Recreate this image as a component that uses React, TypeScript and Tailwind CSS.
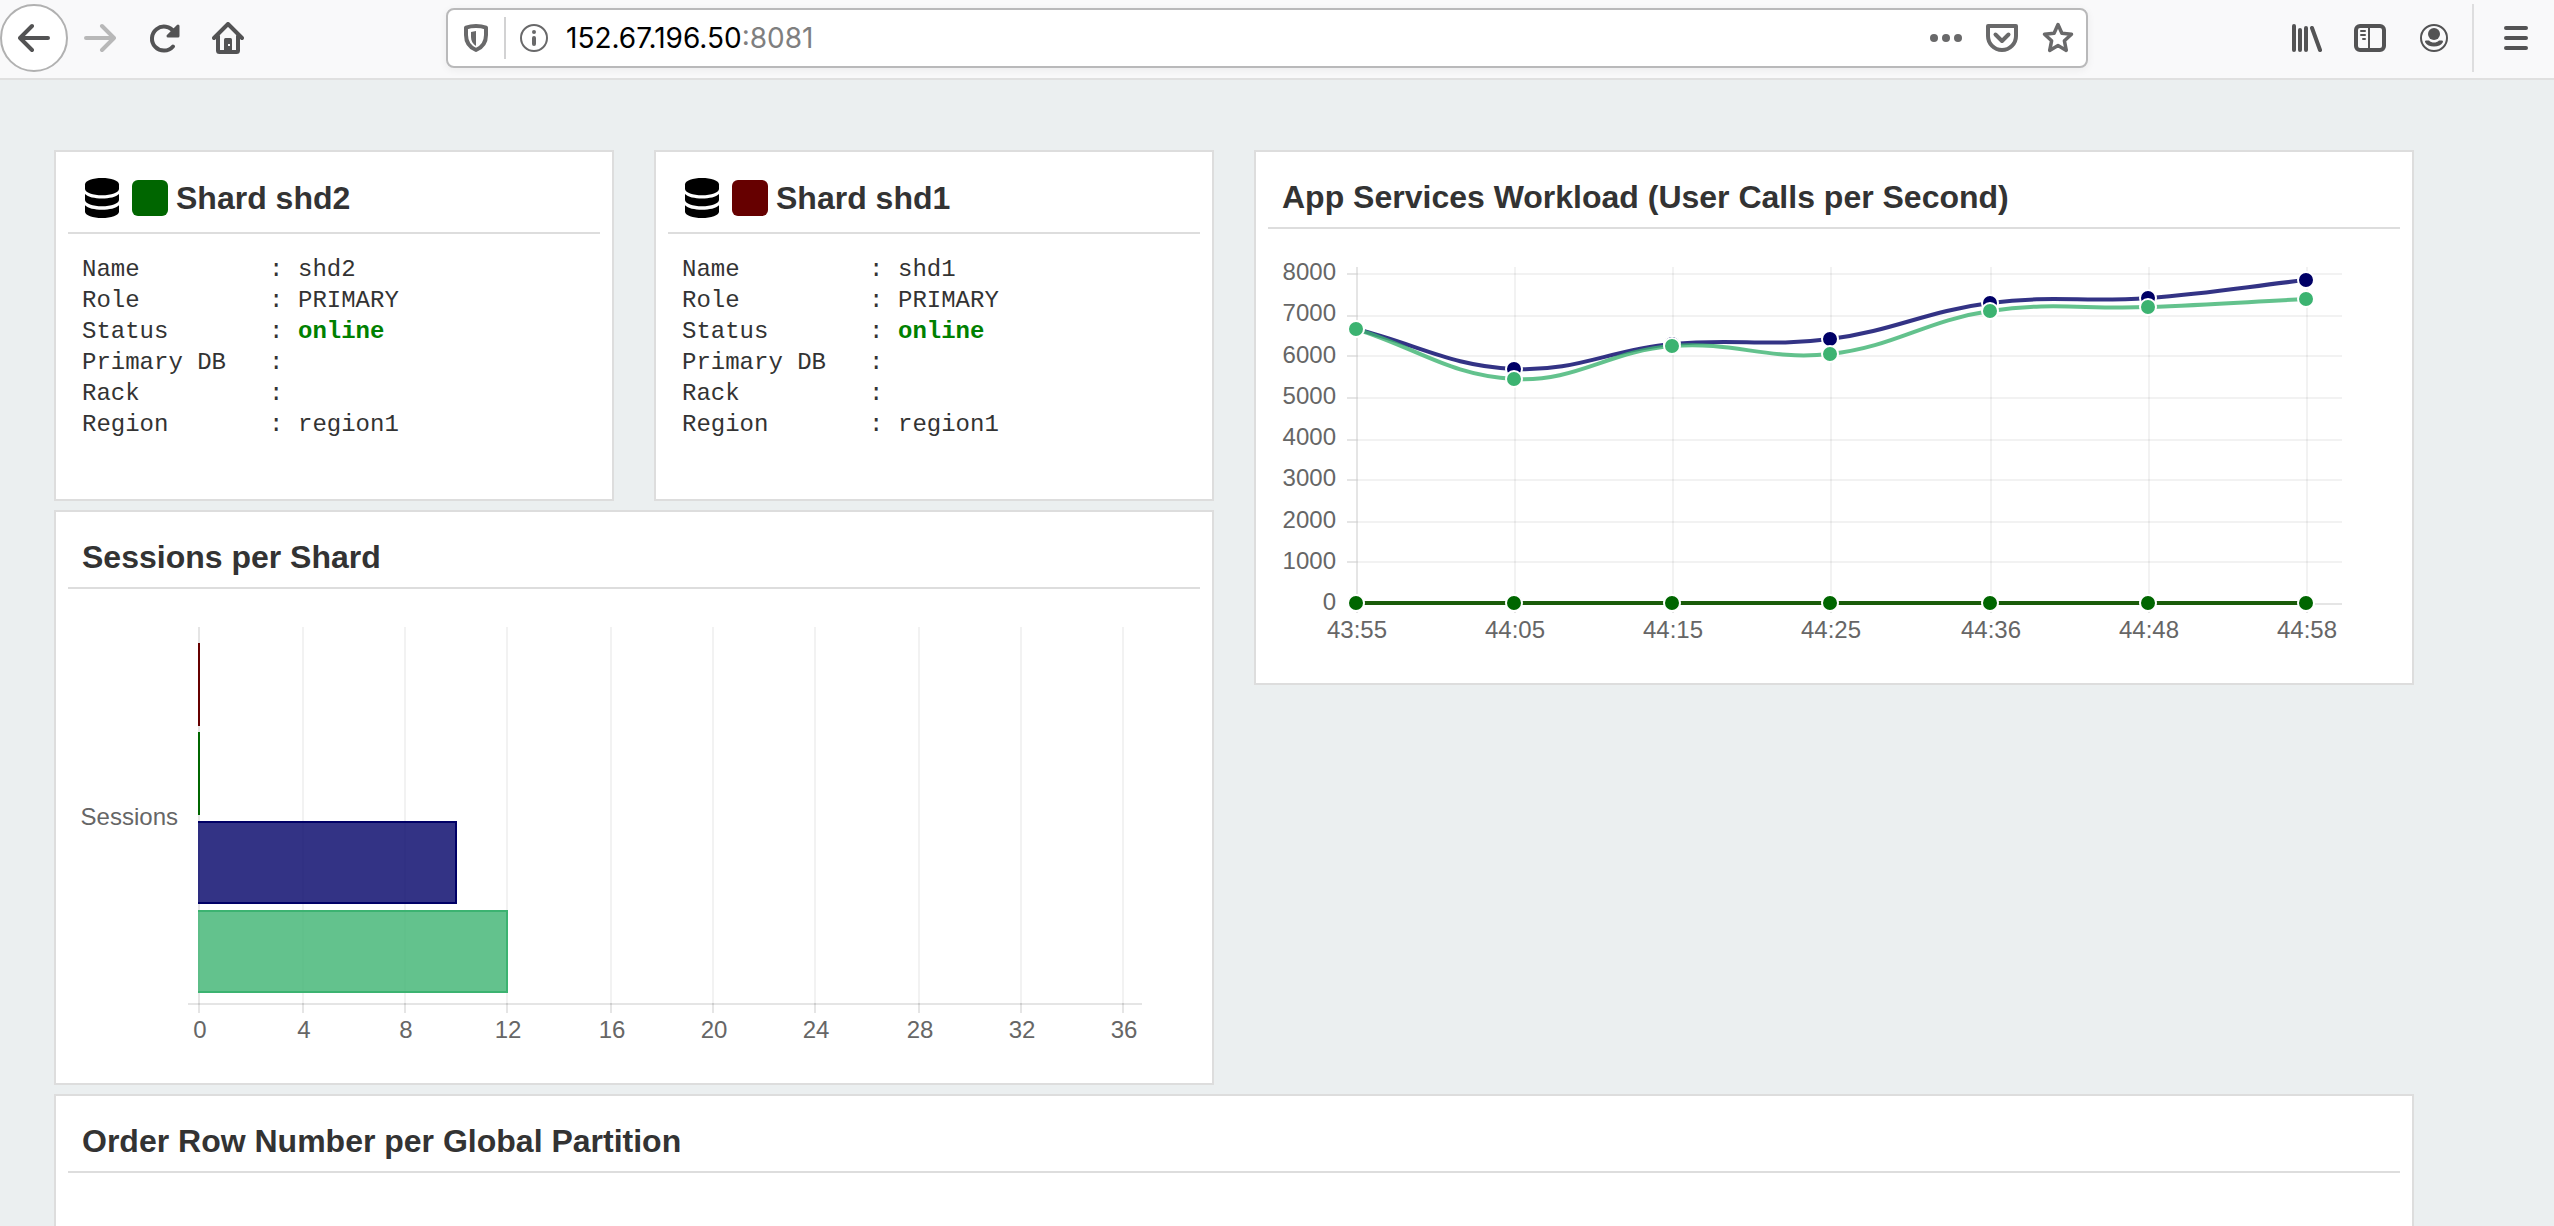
import React from 'react';

type Point = { x: number; y: number };

const SANS = 'font-[Liberation_Sans,Arial,sans-serif]';

function Icon({ children, className = '' }: { children: React.ReactNode; className?: string }) {
  return (
    <svg
      viewBox="0 0 32 32"
      className={`size-8 shrink-0 ${className}`}
      fill="none"
      stroke="currentColor"
      strokeWidth={4}
      strokeLinecap="round"
      strokeLinejoin="round"
      aria-hidden="true"
    >
      {children}
    </svg>
  );
}

function IconButton({ label, children, className = '' }: { label: string; children: React.ReactNode; className?: string }) {
  return (
    <button type="button" aria-label={label} className={`flex shrink-0 items-center justify-center ${className}`}>
      {children}
    </button>
  );
}

function Toolbar() {
  return (
    <header className="flex h-20 shrink-0 items-center border-b-2 border-[#e0e0e0] bg-[#f9f9fa] pb-0.5 text-[#535354]">
      <nav className="flex shrink-0 items-center gap-8">
        <div className="flex items-center gap-4">
          <IconButton label="Back" className="size-[68px] rounded-full border-2 border-[#b1b1b1] bg-white">
            <Icon>
              <path d="M2 16H30M14 4L2 16l12 12" />
            </Icon>
          </IconButton>
          <IconButton label="Forward" className="text-[#b8b8b8]">
            <Icon>
              <path d="M2 16H30M18 4l12 12-12 12" />
            </Icon>
          </IconButton>
        </div>
        <IconButton label="Reload">
          <Icon>
            <path d="M25 24.5A12 12 0 1 1 26 10" />
            <path d="M30 4v10H20z" fill="currentColor" strokeWidth={3} />
          </Icon>
        </IconButton>
        <IconButton label="Home">
          <Icon>
            <path d="M2 16L16 2l14 14M6 14v14.500q0 1.500 1.500 1.500h17q1.500 0 1.500-1.500V14" />
            <rect x="12" y="16" width="8" height="14" rx="1.500" fill="currentColor" stroke="none" />
            <rect x="16" y="22" width="2" height="2" fill="#f9f9fa" stroke="none" />
          </Icon>
        </IconButton>
      </nav>

      <div className="mx-[202px] flex h-[60px] min-w-0 flex-1 items-center rounded-lg border-2 border-[#b9b9ba] bg-white px-3 text-[#69696a] shadow-[0_2px_8px_rgba(0,0,0,0.06)]">
        <IconButton label="Tracking protection">
          <Icon>
            <path d="M16 4c4 0 7.500.700 10 1.600V13c0 7.500-4 12.500-10 15-6-2.500-10-7.500-10-15V5.600C8.500 4.700 12 4 16 4z" />
            <path d="M16 9l-5 1v5c0 4 1.800 7 5 9z" fill="currentColor" stroke="none" />
          </Icon>
        </IconButton>
        <span className="mx-3 h-[42px] w-0.5 shrink-0 bg-[#d2d2d3]" />
        <IconButton label="Site information">
          <Icon>
            <circle cx="16" cy="16" r="13" strokeWidth={2} />
            <circle cx="16" cy="10" r="2" fill="currentColor" stroke="none" />
            <path d="M16 16v6" />
          </Icon>
        </IconButton>
        <label className="ml-4 flex min-w-0 flex-1 items-center font-[Inter,sans-serif] text-[28px] leading-9 text-[#7f7f80]">
          <input
            type="text"
            aria-label="Address"
            defaultValue="152.67.196.50"
            className="field-sizing-content bg-transparent text-black outline-none"
          />
          <span>:8081</span>
        </label>
        <div className="flex shrink-0 items-center gap-6">
          <IconButton label="Page actions">
            <Icon>
              <g fill="currentColor" stroke="none">
                <circle cx="4" cy="16" r="4" />
                <circle cx="16" cy="16" r="4" />
                <circle cx="28" cy="16" r="4" />
              </g>
            </Icon>
          </IconButton>
          <IconButton label="Save to Pocket">
            <Icon>
              <path d="M2 4h28v10a14 14 0 0 1-28 0z" />
              <path d="M9.500 12.500L16 19l6.500-6.500" />
            </Icon>
          </IconButton>
          <IconButton label="Bookmark this page">
            <Icon>
              <path
                strokeWidth={3.500}
                d="M16 2.500l3.900 8.700 9.600 1.100-7.100 6.500 1.900 9.600L16 23.600l-8.300 4.800 1.900-9.600-7.100-6.500 9.600-1.100z"
              />
            </Icon>
          </IconButton>
        </div>
      </div>

      <div className="flex shrink-0 items-center gap-8">
        <IconButton label="Library">
          <Icon>
            <path d="M4 4v24M10 8v20M16 6v22M22 6l8 22" />
          </Icon>
        </IconButton>
        <IconButton label="Sidebars">
          <Icon>
            <rect x="2" y="4" width="28" height="24" rx="4" />
            <path d="M15 5v22M7 9h4M7 13h4M9 17h2" strokeWidth={2} />
          </Icon>
        </IconButton>
        <IconButton label="Account">
          <Icon>
            <circle cx="16" cy="16" r="13" strokeWidth={2} />
            <circle cx="16" cy="12" r="6" fill="currentColor" stroke="none" />
            <path
              d="M8 18.500h3c1.500 1.500 3 2 5 2s3.500-.500 5-2h3c1 0 1.300 1 .700 2-1.500 2.800-4.500 4-8.700 4s-7.200-1.200-8.700-4c-.600-1-.300-2 .700-2z"
              fill="currentColor"
              stroke="none"
            />
          </Icon>
        </IconButton>
      </div>
      <span className="mr-[26px] ml-[22px] h-[68px] w-0.5 shrink-0 bg-[#dededf]" />
      <IconButton label="Menu" className="mr-[22px]">
        <Icon>
          <path d="M6 6h20M6 16h20M6 26h20" />
        </Icon>
      </IconButton>
    </header>
  );
}

function Card({ children, className = '' }: { children: React.ReactNode; className?: string }) {
  return <section className={`border-2 border-[#dddddd] bg-white ${className}`}>{children}</section>;
}

function TitleBar({ title }: { title: string }) {
  return (
    <div className="mx-3 flex h-[77px] items-center border-b-2 border-[#dddddd] px-3.5 pt-3.5">
      <h2 className="text-[32px] leading-10 font-bold">{title}</h2>
    </div>
  );
}

function DatabaseIcon() {
  return (
    <svg viewBox="-3 0 40 40" className="size-10 shrink-0" fill="#000" aria-hidden="true">
      <path d="M0 6.500C0 2.500 8 0 17 0s17 2.500 17 6.500V11c0 3.700-8 6.300-17 6.300S0 14.700 0 11z" />
      <path d="M0 16c3 3 9.500 4.500 17 4.500S31 19 34 16v6c0 3.700-8 6.300-17 6.300S0 25.700 0 22z" />
      <path d="M0 27.300c3 3 9.500 4.500 17 4.500s14-1.500 17-4.500v6.400c0 3.700-8 6.300-17 6.300S0 37.400 0 33.700z" />
    </svg>
  );
}

function ShardCard({ name, swatch }: { name: string; swatch: string }) {
  const rows: [string, string][] = [
    ['Name', name],
    ['Role', 'PRIMARY'],
    ['Status', 'online'],
    ['Primary DB', ''],
    ['Rack', ''],
    ['Region', 'region1'],
  ];
  return (
    <Card>
      <div className="mx-3 flex h-[82px] items-center border-b-2 border-[#dddddd] px-3.5 pt-3">
        <DatabaseIcon />
        <span className={`mr-2 ml-2.5 size-9 shrink-0 rounded-md ${swatch}`} />
        <h2 className="text-[32px] leading-10 font-bold">Shard {name}</h2>
      </div>
      <table className="mx-[26px] mt-5 mb-[59px] text-left font-['Liberation_Mono','Courier_New',monospace] text-2xl leading-[31px]">
        <tbody>
          {rows.map(([label, value]) => (
            <tr key={label}>
              <th scope="row" className="w-[187px] p-0 font-normal">
                {label}
              </th>
              <td className="w-[29px] p-0">:</td>
              <td className={label === 'Status' ? 'p-0 font-bold text-[#008000]' : 'p-0'}>{value}</td>
            </tr>
          ))}
        </tbody>
      </table>
    </Card>
  );
}

const CHART_TEXT = { fill: '#666666', fontSize: 24, fontFamily: '"Liberation Sans", Arial, sans-serif' };

function SessionsChart() {
  const ticks = [143, 247, 349, 451, 555, 657, 759, 863, 965, 1067];
  const bars = [
    { y: 232, width: 259, color: '#000066' },
    { y: 321, width: 310, color: '#3cb371' },
  ];
  return (
    <svg viewBox="0 0 1156 494" className="block h-auto w-full" role="img" aria-label="Sessions per shard">
      {ticks.map((x, i) => (
        <g key={x}>
          <rect x={x - 1} y={38} width={2} height={376} fill="#000" fillOpacity={i === 0 ? 0.1 : 0.05} />
          <rect x={x - 1} y={414} width={2} height={10} fill="#000" fillOpacity={0.1} />
          <text x={x + 1} y={449} textAnchor="middle" {...CHART_TEXT}>
            {i * 4}
          </text>
        </g>
      ))}
      <rect x={132} y={414} width={954} height={2} fill="#000" fillOpacity={0.1} />
      <text x={122} y={236} textAnchor="end" {...CHART_TEXT}>
        Sessions
      </text>
      <rect x={142} y={54} width={2} height={83} fill="#660000" />
      <rect x={142} y={143} width={2} height={83} fill="#006600" />
      {bars.map((bar) => (
        <g key={bar.color}>
          <rect x={142} y={bar.y} width={bar.width} height={83} fill={bar.color} fillOpacity={0.8} />
          <path
            d={`M142 ${bar.y + 1}H${142 + bar.width - 1}V${bar.y + 82}H142`}
            fill="none"
            stroke={bar.color}
            strokeWidth={2}
          />
        </g>
      ))}
    </svg>
  );
}

/* Smooth curve through the points, with control handles scaled by neighbour distance. */
function smoothPath(points: Point[]): string {
  const tension = 0.4;
  const handles = points.map((cur, i) => {
    const prev = points[i - 1] ?? cur;
    const next = points[i + 1] ?? cur;
    const before = Math.hypot(cur.x - prev.x, cur.y - prev.y);
    const after = Math.hypot(next.x - cur.x, next.y - cur.y);
    const a = (tension * before) / (before + after);
    const b = (tension * after) / (before + after);
    return {
      into: { x: cur.x - a * (next.x - prev.x), y: cur.y - a * (next.y - prev.y) },
      out: { x: cur.x + b * (next.x - prev.x), y: cur.y + b * (next.y - prev.y) },
    };
  });
  return points
    .map((p, i) => {
      if (i === 0) return `M${p.x} ${p.y}`;
      const c1 = handles[i - 1].out;
      const c2 = handles[i].into;
      return `C${c1.x} ${c1.y} ${c2.x} ${c2.y} ${p.x} ${p.y}`;
    })
    .join('');
}

function WorkloadChart() {
  const columns = [101, 259, 417, 575, 735, 893, 1051];
  const times = ['43:55', '44:05', '44:15', '44:25', '44:36', '44:48', '44:58'];
  const gridRows = [45, 87, 127, 169, 211, 251, 293, 333];
  const labelRows = [43, 84, 126, 167, 208, 249, 291, 332, 373];
  const series = [
    { color: '#660000', values: [374, 374, 374, 374, 374, 374, 374] },
    { color: '#006600', values: [374, 374, 374, 374, 374, 374, 374] },
    { color: '#000066', values: [100, 140, 115, 110, 74, 69, 51] },
    { color: '#3cb371', values: [100, 150, 117, 125, 82, 78, 70] },
  ].map((s) => ({ ...s, points: s.values.map((y, i) => ({ x: columns[i] - 1, y })) }));

  return (
    <svg viewBox="0 0 1156 454" className="block h-auto w-full" role="img" aria-label="User calls per second">
      {gridRows.map((y) => (
        <g key={y}>
          <rect x={91} y={y - 1} width={9} height={2} fill="#000" fillOpacity={0.1} />
          <rect x={100} y={y - 1} width={986} height={2} fill="#000" fillOpacity={0.05} />
        </g>
      ))}
      <rect x={91} y={374} width={995} height={2} fill="#000" fillOpacity={0.1} />
      {columns.map((x, i) => (
        <g key={x}>
          <rect x={x - 1} y={38} width={2} height={336} fill="#000" fillOpacity={i === 0 ? 0.1 : 0.05} />
          <rect x={x - 1} y={374} width={2} height={10} fill="#000" fillOpacity={0.1} />
          <text x={x} y={409} textAnchor="middle" {...CHART_TEXT}>
            {times[i]}
          </text>
        </g>
      ))}
      {labelRows.map((y, i) => (
        <text key={y} x={80} y={y + 8} textAnchor="end" {...CHART_TEXT}>
          {8000 - i * 1000}
        </text>
      ))}
      {series.map((s) => (
        <g key={s.color}>
          <path d={smoothPath(s.points)} fill="none" stroke={s.color} strokeOpacity={0.8} strokeWidth={4} />
          {s.points.map((p) => (
            <circle key={p.x} cx={p.x} cy={p.y} r={8} fill={s.color} stroke="#fff" strokeWidth={2} />
          ))}
        </g>
      ))}
    </svg>
  );
}

export default function App() {
  return (
    <div className={`flex h-screen flex-col overflow-hidden bg-[#ebeff0] text-[#333333] ${SANS}`}>
      <Toolbar />
      <main className="flex min-h-0 flex-1 flex-col gap-[9px] overflow-hidden pt-[70px] pr-[140px] pl-[54px]">
        <div className="grid shrink-0 grid-cols-2 items-start gap-10">
          <div className="flex flex-col gap-[9px]">
            <div className="grid grid-cols-2 gap-10">
              <ShardCard name="shd2" swatch="bg-[#006600]" />
              <ShardCard name="shd1" swatch="bg-[#660000]" />
            </div>
            <Card>
              <TitleBar title="Sessions per Shard" />
              <SessionsChart />
            </Card>
          </div>
          <Card>
            <TitleBar title="App Services Workload (User Calls per Second)" />
            <WorkloadChart />
          </Card>
        </div>
        <Card className="min-h-[535px] shrink-0">
          <TitleBar title="Order Row Number per Global Partition" />
        </Card>
      </main>
    </div>
  );
}
